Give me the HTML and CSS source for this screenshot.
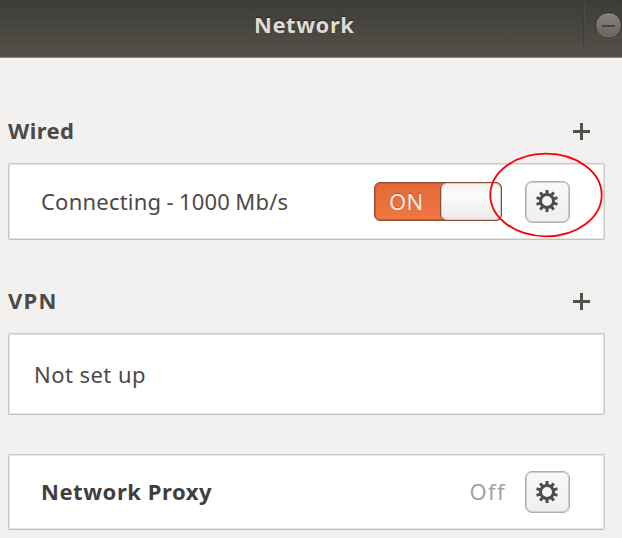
FILE: index.html
```html
<!DOCTYPE html>
<html lang="en">
<head>
<meta charset="utf-8">
<title>Network</title>
<link rel="stylesheet" href="styles.css">
</head>
<body>
<svg class="defs" aria-hidden="true">
  <symbol id="gear" viewBox="-12 -12 24 24">
    <circle r="6.5" fill="none" stroke="currentColor" stroke-width="3"/>
    <g fill="currentColor">
      <path id="teeth" d="M-1.5-11h3v4h-3zM-1.5 7h3v4h-3z"/>
      <use href="#teeth" transform="rotate(38)"/>
      <use href="#teeth" transform="rotate(72)"/>
      <use href="#teeth" transform="rotate(108)"/>
      <use href="#teeth" transform="rotate(142)"/>
    </g>
  </symbol>
</svg>
<header class="titlebar">
  <h1 class="title">Network</h1>
  <div class="controls"><span class="minimize"></span></div>
</header>
<main class="content">
  <div class="section-head"><h2 class="wired">Wired</h2><span class="plus"></span></div>
  <section class="card">
    <span class="status">Connecting - 1000 Mb/s</span>
    <span class="switch"><span class="on">ON</span><span class="knob"></span></span>
    <span class="gear-button"><svg><use href="#gear"/></svg></span>
    <svg class="highlight" viewBox="0 0 114 86"><ellipse cx="57" cy="43" rx="55.7" ry="41.3"/></svg>
  </section>
  <div class="section-head second"><h2 class="vpn">VPN</h2><span class="plus"></span></div>
  <section class="card vpn-card"><span class="not-set">Not set up</span></section>
  <section class="card proxy-card">
    <span class="proxy">Network Proxy</span>
    <span class="off">Off</span>
    <span class="gear-button"><svg><use href="#gear"/></svg></span>
  </section>
</main>
</body>
</html>
```
FILE: styles.css
```css
* { box-sizing: border-box; }
body {
  margin: 0;
  height: 538px;
  overflow: hidden;
  background: #f2f1ef;
  color: #4b4a49;
  font: 22px/30px "Noto Sans", "Open Sans", sans-serif;
  white-space: nowrap;
}
.defs { position: absolute; width: 0; height: 0; }
h1, h2 { margin: 0; font-size: 22px; font-weight: 700; line-height: 30px; }
.titlebar {
  display: grid;
  grid-template-columns: 254px 1fr 39px;
  height: 58px;
  background: linear-gradient(#3d3c37, #545149);
  border-bottom: 1px solid #8f8782;
}
.title {
  grid-column: 2;
  padding-top: 9px;
  color: #dfdbd2;
  letter-spacing: 0.55px;
  text-shadow: 0 -1px 1px #22211e;
}
.controls {
  height: 44px;
  margin-top: 3px;
  padding: 9px 0 0 11px;
  border-left: 1px solid #3e3d38;
  box-shadow: inset 1px 0 #4c4a44;
}
.minimize {
  display: grid;
  place-items: center;
  width: 27px;
  height: 27px;
  border: 1px solid #32312d;
  border-radius: 50%;
  background: linear-gradient(#85837c, #66645d);
  box-shadow: 0 1px #5a5850;
}
.minimize::before { content: ""; width: 13px; height: 2px; background: #45443e; }
.content { padding: 57px 17px 0 8px; }
.section-head {
  display: flex;
  justify-content: space-between;
  height: 48px;
  padding-right: 15px;
}
.wired { letter-spacing: 0.4px; }
.vpn { letter-spacing: 1.3px; }
.second { margin-top: 45px; }
.plus {
  width: 17px;
  height: 17px;
  margin-top: 8px;
  background: linear-gradient(#50524e, #50524e) center / 17px 3px no-repeat,
    linear-gradient(#50524e, #50524e) center / 3px 17px no-repeat;
}
.card {
  position: relative;
  display: flex;
  align-items: center;
  height: 77px;
  padding: 0 34px 0 32px;
  background: #fff;
  border: 1px solid #cbc7c3;
  border-bottom-color: #c3c1bc;
  border-radius: 2px;
  box-shadow: inset 0 0 0 1px #e6e4e1;
}
.vpn-card { height: 82px; padding-left: 25px; }
.not-set { letter-spacing: 0.45px; }
.proxy-card { height: 76px; margin-top: 39px; }
.status { flex: 1; padding-bottom: 2px; letter-spacing: 0.22px; word-spacing: -0.8px; }
.switch {
  display: flex;
  width: 128px;
  height: 39px;
  margin-right: 23px;
  border: 1px solid #8e4b31;
  border-radius: 6px;
  background: linear-gradient(#e2683a, #f0773f);
  box-shadow: inset 0 0 0 1px #c95f38;
}
.on {
  flex: 1;
  padding: 3px 0 0 14px;
  color: #f8ece6;
  letter-spacing: 0.2px;
  text-shadow: 0 -1px 1px #b9542e;
}
.knob {
  width: 62px;
  height: 39px;
  margin: -1px -1px 0 0;
  border: 1.5px solid #864c36;
  border-radius: 7px;
  background: linear-gradient(#f4f3f2, #fbfbfb 30%, #ecebea);
  box-shadow: inset 0 0 0 1px #d9cbc5;
}
.gear-button {
  display: grid;
  place-items: center;
  width: 45px;
  height: 42px;
  border: 1px solid #b0aeac;
  border-radius: 7px;
  background: linear-gradient(#f9f9f8, #f0efee);
  box-shadow: inset 0 0 0 1px #d0cecc;
}
.gear-button svg { width: 24px; height: 24px; margin: 0 1px 1px 0; color: #4c4c4b; }
.highlight {
  position: absolute;
  left: 480px;
  top: -12px;
  width: 114px;
  height: 86px;
  fill: none;
  stroke: #f80007;
  stroke-width: 1.8;
}
.proxy { flex: 1; padding-bottom: 2px; letter-spacing: 0.55px; font-weight: 700; color: #403f3e; }
.off { margin-right: 19px; padding-bottom: 2px; letter-spacing: 1.4px; color: #a5a3a1; }
```
